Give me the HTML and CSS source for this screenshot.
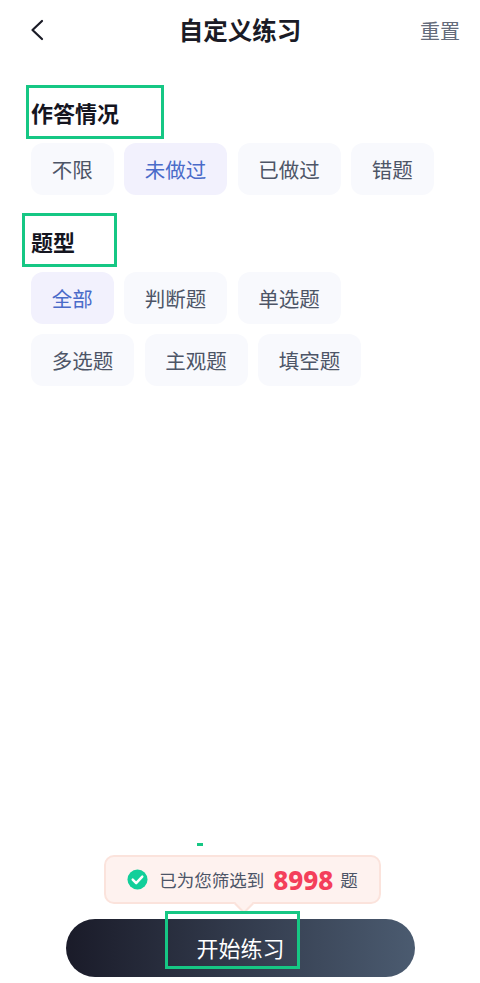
FILE: index.html
```html
<!DOCTYPE html>
<html lang="zh-CN">
<head>
    <meta charset="UTF-8">
    <meta name="viewport" content="width=device-width, initial-scale=1.0">
    <title>自定义练习</title>
    <link rel="stylesheet" href="styles.css">
</head>
<body>
    <div class="page">
        <header class="topbar">
            <svg class="back" width="16" height="24" viewBox="0 0 16 24">
                <path d="M13 3 L3.5 12 L13 21" fill="none" stroke="#1a1b26" stroke-width="2.2" stroke-linecap="round" stroke-linejoin="round"/>
            </svg>
            <h1>自定义练习</h1>
            <span class="reset">重置</span>
        </header>

        <section class="group first">
            <h2>作答情况</h2>
            <div class="chips">
                <span class="chip">不限</span>
                <span class="chip active">未做过</span>
                <span class="chip">已做过</span>
                <span class="chip">错题</span>
            </div>
        </section>

        <section class="group">
            <h2>题型</h2>
            <div class="chips">
                <span class="chip active">全部</span>
                <span class="chip">判断题</span>
                <span class="chip">单选题</span>
                <span class="chip">多选题</span>
                <span class="chip">主观题</span>
                <span class="chip">填空题</span>
            </div>
        </section>

        <footer class="bottom">
            <div class="tip">
                <svg class="tick" width="21" height="21" viewBox="0 0 22 22">
                    <circle cx="11" cy="11" r="10.5" fill="#12cf9a"/>
                    <path d="M6 11.2 L9.6 14.8 L16 8" fill="none" stroke="#fff" stroke-width="2.6" stroke-linecap="round" stroke-linejoin="round"/>
                </svg>
                <span>已为您筛选到</span>
                <strong>8998</strong>
                <span>题</span>
            </div>
            <button type="button" class="start">开始练习</button>
        </footer>

        <!-- annotation marks that lie over the screen -->
        <div class="mark mark-status"></div>
        <div class="mark mark-type"></div>
        <div class="mark mark-start"></div>
        <div class="dash"></div>
    </div>
</body>
</html>
```

FILE: styles.css
```css
* {
    box-sizing: border-box;
}

body {
    margin: 0;
    background: #fff;
    font-family: "Noto Sans CJK SC", "Noto Sans", sans-serif;
}

.page {
    position: relative;
    display: flex;
    flex-direction: column;
    width: 480px;
    height: 983px;
    overflow: hidden;
}

.topbar {
    display: grid;
    grid-template-columns: 1fr auto 1fr;
    align-items: center;
    height: 60px;
    padding: 0 20px;
}

.topbar h1 {
    margin: 0;
    font-size: 24.5px;
    font-weight: 700;
    line-height: 60px;
    color: #1a1b26;
}

.back {
    display: block;
    margin-left: 9px;
}

.reset {
    justify-self: end;
    font-size: 20px;
    color: #646b7a;
}

.group {
    padding: 0 31px;
}

.group.first {
    margin-top: 35px;
}

.group h2 {
    margin: 0;
    height: 48px;
    font-size: 22px;
    font-weight: 700;
    line-height: 34px;
    color: #14151f;
}

.group + .group {
    margin-top: 29px;
}

.chips {
    display: flex;
    flex-wrap: wrap;
    gap: 10px 10.5px;
    max-width: 340px;
}

.group.first .chips {
    max-width: none;
}

.chip {
    height: 52px;
    padding: 0 20.75px;
    border-radius: 12px;
    background: #f8f9fd;
    font-size: 20.5px;
    line-height: 52px;
    color: #4d5567;
}

.chip.active {
    background: #f2f1fd;
    color: #4a6bc9;
}

.bottom {
    display: flex;
    flex-direction: column;
    align-items: center;
    margin-top: auto;
    padding: 0 0 6px 1px;
}

.tip {
    position: relative;
    display: flex;
    align-items: center;
    justify-content: center;
    gap: 9px;
    width: 277px;
    height: 49px;
    margin: 0 0 15px 4px;
    border: 2px solid #fbe3dc;
    border-radius: 10px;
    background: #fef2ef;
    font-size: 17.5px;
    color: #4d5567;
}

.tip::after {
    content: "";
    position: absolute;
    left: 50%;
    bottom: -9px;
    width: 12px;
    height: 12px;
    margin-left: -6px;
    border-right: 2px solid #fbe3dc;
    border-bottom: 2px solid #fbe3dc;
    background: #fef2ef;
    transform: rotate(45deg);
}

.tip strong {
    margin-right: -2px;
    font-family: "Noto Sans", sans-serif;
    font-size: 26px;
    font-weight: 800;
    color: #f43f5b;
}

.tick {
    margin-right: 2px;
}

.start {
    display: block;
    width: 349px;
    height: 58px;
    padding: 0 0 2px;
    border: none;
    border-radius: 29px;
    background: linear-gradient(90deg, #1a1b29, #4b5b70);
    font-family: inherit;
    font-size: 22px;
    color: #fff;
}

.mark {
    position: absolute;
    border: 3px solid #16c784;
}

.mark-status {
    left: 26px;
    top: 85px;
    width: 138px;
    height: 54px;
}

.mark-type {
    left: 22px;
    top: 213px;
    width: 95px;
    height: 54px;
}

.mark-start {
    left: 165px;
    top: 911px;
    width: 135px;
    height: 58px;
}

.dash {
    position: absolute;
    left: 197px;
    top: 843px;
    width: 6px;
    height: 3px;
    background: #16c784;
}
```
